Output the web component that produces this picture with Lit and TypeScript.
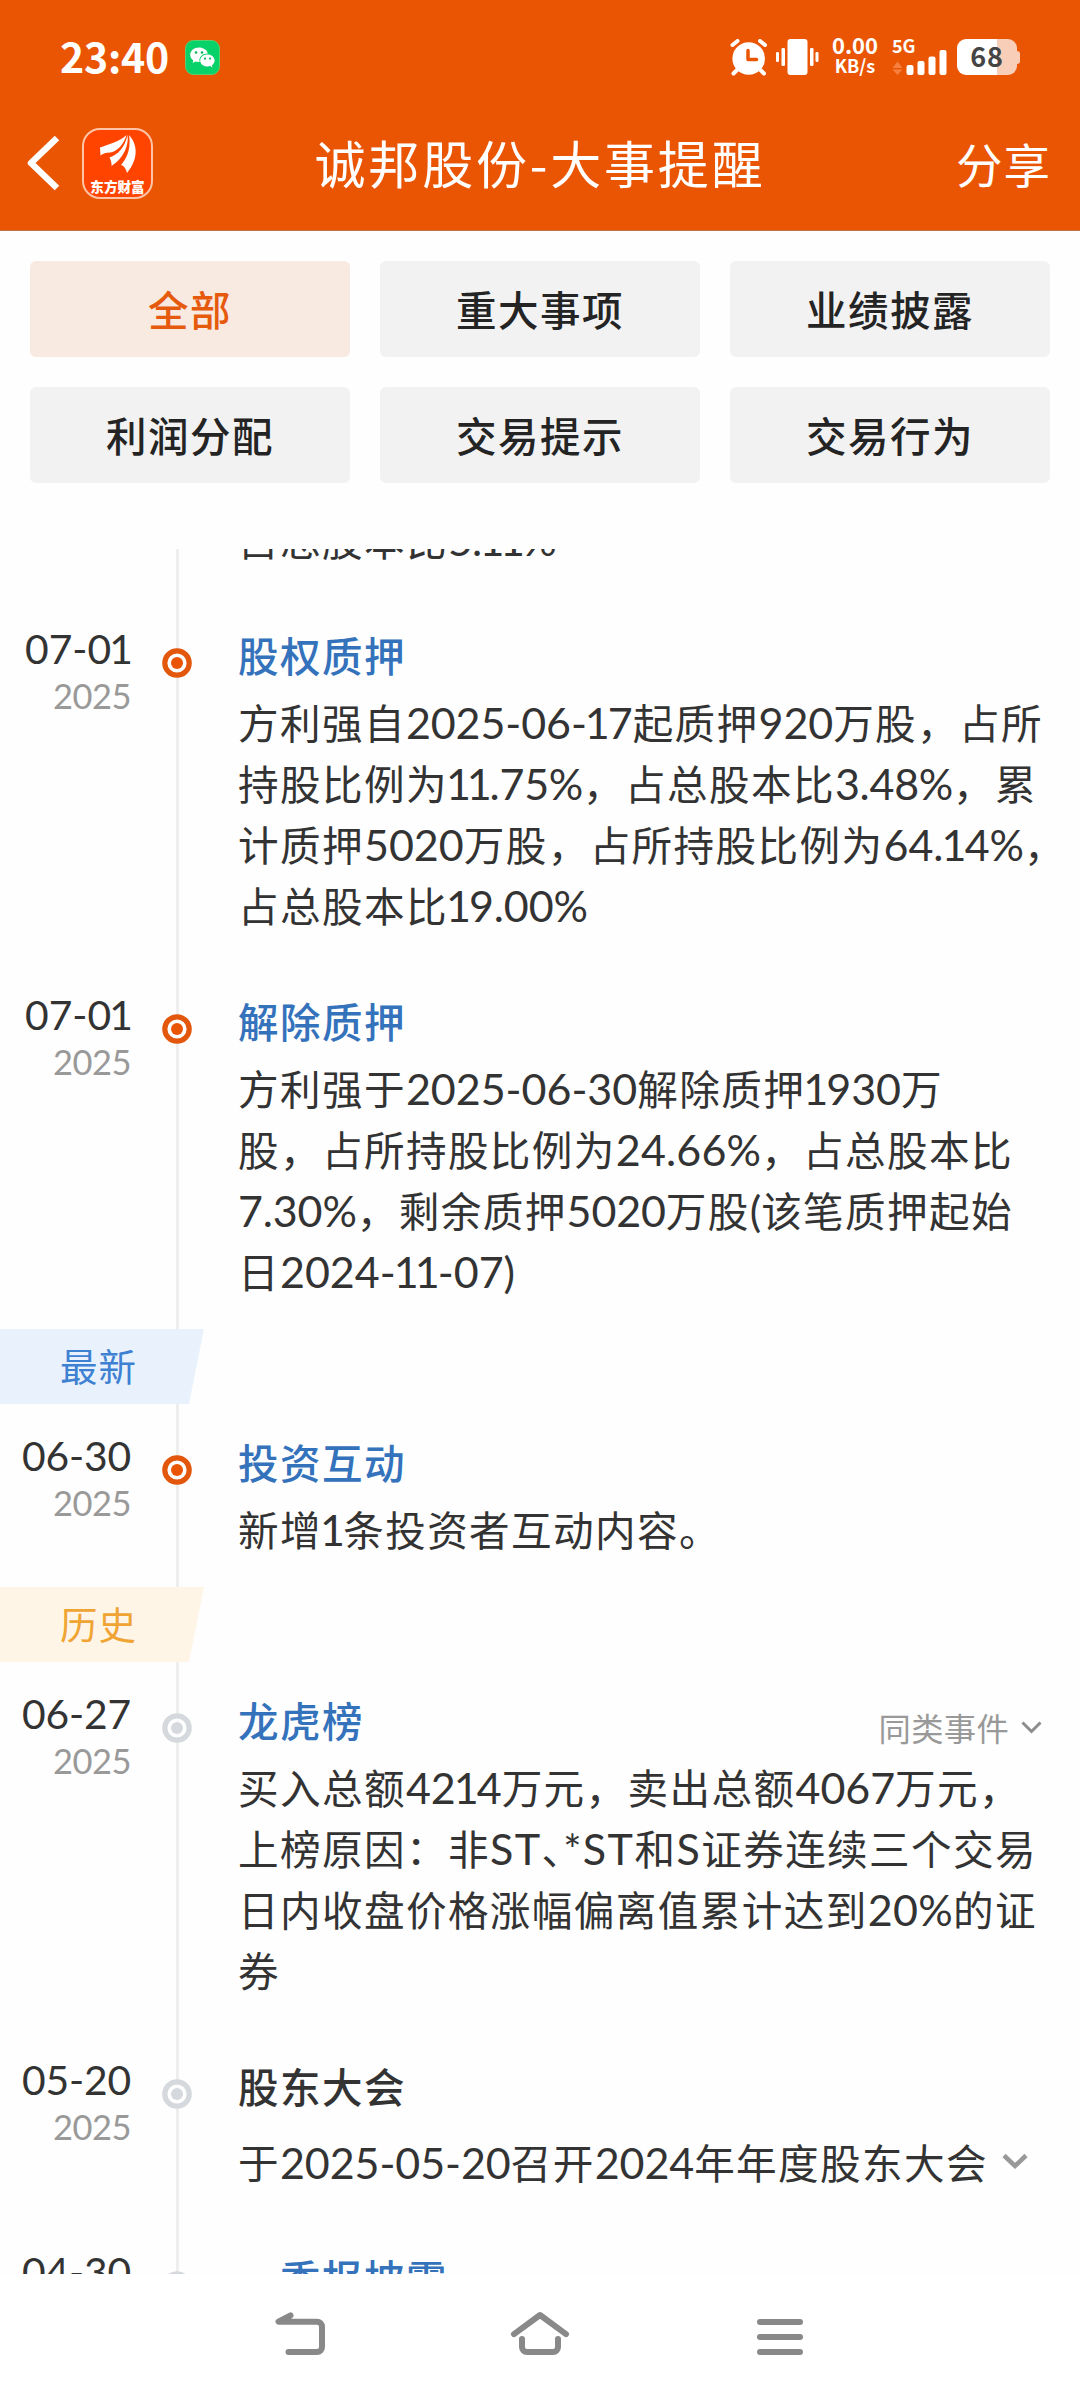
import { LitElement, html, css, svg, nothing } from "lit";
import { customElement, property } from "lit/decorators.js";

interface TextRow {
  text: string;
  width?: number;
}

interface EventItem {
  date: string;
  title: string;
  plain?: boolean;
  past?: boolean;
  similar?: boolean;
  expandable?: boolean;
  rows: TextRow[];
}

const FILTERS = ["全部", "重大事项", "业绩披露", "利润分配", "交易提示", "交易行为"];

const UPCOMING: EventItem[] = [
  {
    date: "07-01",
    title: "股权质押",
    rows: [
      { text: "方利强自2025-06-17起质押920万股，占所", width: 805 },
      { text: "持股比例为11.75%，占总股本比3.48%，累", width: 799 },
      { text: "计质押5020万股，占所持股比例为64.14%，", width: 828 },
      { text: "占总股本比19.00%", width: 350 },
    ],
  },
  {
    date: "07-01",
    title: "解除质押",
    rows: [
      { text: "方利强于2025-06-30解除质押1930万", width: 705 },
      { text: "股，占所持股比例为24.66%，占总股本比", width: 775 },
      { text: "7.30%，剩余质押5020万股(该笔质押起始", width: 775 },
      { text: "日2024-11-07)", width: 277 },
    ],
  },
];

const LATEST: EventItem[] = [
  { date: "06-30", title: "投资互动", rows: [{ text: "新增1条投资者互动内容。", width: 483 }] },
];

const HISTORY: EventItem[] = [
  {
    date: "06-27",
    title: "龙虎榜",
    past: true,
    similar: true,
    rows: [
      { text: "买入总额4214万元，卖出总额4067万元，", width: 783 },
      { text: "上榜原因：非ST、*ST和S证券连续三个交易", width: 799 },
      { text: "日内收盘价格涨幅偏离值累计达到20%的证", width: 799 },
      { text: "券" },
    ],
  },
  {
    date: "05-20",
    title: "股东大会",
    plain: true,
    past: true,
    expandable: true,
    rows: [{ text: "于2025-05-20召开2024年年度股东大会", width: 750 }],
  },
  { date: "04-30", title: "一季报披露", past: true, rows: [{ text: "" }] },
];

/** One line of mixed text; its Latin runs are spaced so the line has the given width. */
@customElement("text-row")
class TextRowElement extends LitElement {
  @property() text = "";
  @property({ type: Number }) width = 0;

  static styles = css`
    :host {
      display: inline-block;
      white-space: nowrap;
    }
    .run {
      font-family: Lato, "Noto Sans CJK SC", sans-serif;
      font-size: 1.060em;
      line-height: 1;
      letter-spacing: var(--run-spacing, 0px);
    }
    .thin {
      margin: 0 -0.045em;
    }
    .half {
      font-feature-settings: "halt";
    }
  `;

  updated() {
    this.style.setProperty("--run-spacing", "0px");
    const count = (this.text.match(/[\x20-\x7e]/g) ?? []).length;
    if (!this.width || !count) return;
    const gap = this.width - this.getBoundingClientRect().width;
    this.style.setProperty("--run-spacing", `${(gap / count).toFixed(3)}px`);
  }

  render() {
    return this.text.split(/([\x20-\x7e]+)/).map((part) => {
      if (!part) return nothing;
      if (part === "、") return html`<span class="half">${part}</span>`;
      if (!/^[\x20-\x7e]/.test(part)) return part;
      const pieces = part.split(/(1)/).map((p) => (p === "1" ? html`<span class="thin">1</span>` : p));
      return html`<span class="run">${pieces}</span>`;
    });
  }
}

@customElement("status-bar")
class StatusBar extends LitElement {
  static styles = css`
    :host {
      display: flex;
      align-items: center;
      height: 114px;
      padding: 0 60px 0 60px;
      color: #fff;
      font-family: "Noto Sans CJK SC", sans-serif;
      font-weight: 700;
    }
    svg {
      display: block;
      flex: none;
    }
    .clock {
      width: 125px;
      padding-bottom: 5px;
      font-size: 41px;
      line-height: 60px;
      letter-spacing: -0.2px;
      font-weight: 700;
    }
    .spacer {
      flex: 1;
    }
    .alarm {
      margin-right: 8px;
    }
    .speed {
      width: 50px;
      margin-left: 11px;
      padding-bottom: 4px;
      text-align: center;
      font-size: 22px;
      line-height: 21px;
    }
    .unit {
      font-size: 18px;
    }
    .network {
      display: flex;
      flex-direction: column;
      width: 56px;
      height: 36px;
      margin: 0 9px 0 12px;
    }
    .gen {
      font-size: 18px;
      line-height: 13px;
      height: 11px;
    }
    .battery {
      display: flex;
      align-items: center;
    }
    .level {
      width: 60px;
      height: 36px;
      border-radius: 9px;
      background: linear-gradient(90deg, #fff 0 40px, #f8ceb8 40px);
      color: #454545;
      font-size: 27px;
      line-height: 34px;
      text-align: center;
      letter-spacing: 0.8px;
    }
    .nub {
      width: 3px;
      height: 13px;
      border-radius: 0 3px 3px 0;
      background: #f8ceb8;
    }
  `;

  render() {
    return html`
      <div class="clock">23:40</div>
      <svg width="35" height="35" viewBox="0 0 35 35">
        <rect x=".5" y=".5" width="34" height="34" rx="8" fill="#07d169" stroke="#5bcf6b" />
        <path
          fill="#fff"
          d="M14 7.5c-5 0-8.8 3.2-8.8 7.3 0 2.3 1.2 4.2 3.1 5.6l-.7 2.6 3-1.6c1 .3 2.2.5 3.4.5h.7c-.2-.6-.3-1.1-.3-1.700 0-3.800 3.600-6.700 8-6.700h.5C22 10 18.300 7.500 14 7.500Z"
        />
        <path
          fill="#fff"
          d="M22.500 14.500c-4.200 0-7.300 2.700-7.300 6 0 3.400 3.100 6 7.300 6 .9 0 1.800-.1 2.600-.4l2.400 1.300-.6-2.200c1.700-1.200 2.700-2.900 2.700-4.700 0-3.300-3-6-7.100-6Z"
        />
        <g fill="#07b75b">
          <circle cx="11" cy="12.500" r="1.300" />
          <circle cx="17" cy="12.500" r="1.300" />
          <circle cx="20" cy="18.600" r="1.100" />
          <circle cx="25" cy="18.600" r="1.100" />
        </g>
      </svg>
      <div class="spacer"></div>
      <svg class="alarm" width="38" height="37" viewBox="0 0 38 37">
        <circle cx="18.700" cy="19.500" r="16.300" fill="#fff" />
        <g stroke="#fff" stroke-width="4" stroke-linecap="round">
          <path d="M2.500 6 7.500 2M35 6l-5-4M7 31l-3.500 3.500M30.500 31l3.500 3.500" />
        </g>
        <path d="M18 11.500v9h8.500" fill="none" stroke="#ea5504" stroke-width="3.500" stroke-linecap="round" stroke-linejoin="round" />
      </svg>
      <svg width="43" height="36" viewBox="0 0 43 36">
        <rect x="11.500" width="20" height="36" rx="3" fill="#fff" />
        <g fill="#fff">
          <rect x="5.500" y="9" width="3.500" height="18" rx="1.200" />
          <rect x="34" y="9" width="3.500" height="18" rx="1.200" />
          <rect y="13" width="3" height="10" rx="1.200" />
          <rect x="39.500" y="13" width="3" height="10" rx="1.200" />
        </g>
      </svg>
      <div class="speed">
        <div>0.00</div>
        <div class="unit">KB/s</div>
      </div>
      <div class="network">
        <div class="gen">5G</div>
        <svg width="56" height="25" viewBox="0 0 56 25">
          <path d="M.5 18 5.500 11.500 10.500 18ZM.5 19.500 5.500 25 10.500 19.500Z" fill="#f58040" />
          <g fill="#fff">
            <rect x="14.500" y="15" width="7" height="10" rx="2" />
            <rect x="25.500" y="11" width="7" height="14" rx="2" />
            <rect x="36.500" y="6.500" width="7" height="18.500" rx="2" />
            <rect x="47.500" y="0" width="7" height="25" rx="2" />
          </g>
        </svg>
      </div>
      <div class="battery">
        <div class="level">68</div>
        <div class="nub"></div>
      </div>
    `;
  }
}

@customElement("title-bar")
class TitleBar extends LitElement {
  static styles = css`
    :host {
      display: grid;
      grid-template-columns: 240px 1fr 240px;
      align-items: center;
      height: 98px;
      padding-bottom: 18px;
      color: #fff;
      font-family: "Noto Sans CJK SC", sans-serif;
    }
    .left {
      display: flex;
      align-items: center;
      gap: 22px;
      padding-left: 26px;
    }
    svg {
      display: block;
    }
    .logo {
      display: flex;
      flex-direction: column;
      align-items: center;
      box-sizing: border-box;
      width: 71px;
      height: 71px;
      border: 2px solid #ffc4a6;
      border-radius: 18px;
      background: #ff4400;
    }
    .brand {
      margin-top: 4px;
      font-size: 13.600px;
      line-height: 16px;
      font-weight: 900;
      white-space: nowrap;
    }
    .title {
      padding-bottom: 2px;
      text-align: center;
      font-size: 51px;
      line-height: 70px;
      letter-spacing: 2.800px;
      white-space: nowrap;
    }
    .share {
      padding-right: 29px;
      padding-bottom: 1px;
      text-align: right;
      font-size: 46.500px;
      line-height: 66px;
      letter-spacing: 1px;
    }
  `;

  render() {
    return html`
      <div class="left">
        <svg width="34" height="56" viewBox="0 0 34 56">
          <path d="M31 3 5 28l26 25" fill="none" stroke="#fff" stroke-width="6.500" stroke-linejoin="round" />
        </svg>
        <div class="logo">
          <svg width="38" height="44" viewBox="0 0 38 44">
            <g fill="#fff">
              <path d="M1 17.500C9 14.500 20 12 27.500 5 25 14 18 22 11 22.500 7 22.500 4 23.500 1.500 25.500Z" />
              <path d="M28.500 5C30 15 25 28 12.500 36 13 33 11.500 29.500 10.500 27.500 19 25 26 17 28.500 5Z" />
              <path d="M30 5C41 17 37 32 28 43 27 39 25.500 36 22 35 29 27 32 17 30 5Z" />
            </g>
          </svg>
          <div class="brand">东方财富</div>
        </div>
      </div>
      <div class="title">诚邦股份-大事提醒</div>
      <div class="share">分享</div>
    `;
  }
}

@customElement("filter-grid")
class FilterGrid extends LitElement {
  static styles = css`
    :host {
      display: grid;
      grid-template-columns: repeat(3, 1fr);
      grid-auto-rows: 96px;
      gap: 30px;
      padding: 30px 30px 66px;
      font-family: "Noto Sans CJK SC", sans-serif;
    }
    .chip {
      border-radius: 6px;
      background: #f2f2f2;
      color: #242424;
      font-size: 40.500px;
      font-weight: 500;
      line-height: 95px;
      letter-spacing: 1.500px;
      text-align: center;
    }
    .active {
      background: #f9eae1;
      color: #e55a0d;
    }
  `;

  render() {
    return FILTERS.map((name, i) => html`<div class="chip ${i === 0 ? "active" : ""}">${name}</div>`);
  }
}

@customElement("section-flag")
class SectionFlag extends LitElement {
  @property() label = "";
  @property({ reflect: true }) tone = "blue";

  static styles = css`
    :host {
      display: block;
      height: 75px;
    }
    .flag {
      box-sizing: border-box;
      width: 204px;
      height: 75px;
      padding-left: 60px;
      clip-path: polygon(0 0, 100% 0, 189px 100%, 0 100%);
      background: #e9f2fc;
      color: #3e81d2;
      font-family: "Noto Sans CJK SC", sans-serif;
      font-size: 37.500px;
      line-height: 72px;
      letter-spacing: 1px;
    }
    :host([tone="amber"]) .flag {
      background: #fef5e7;
      color: #efa434;
    }
  `;

  render() {
    return html`<div class="flag">${this.label}</div>`;
  }
}

@customElement("event-card")
class EventCard extends LitElement {
  @property({ attribute: false }) item!: EventItem;

  static styles = css`
    :host {
      display: grid;
      grid-template-columns: 132px 90px 1fr;
      padding: 0 30px 26px 0;
      color: #333;
      font-family: "Noto Sans CJK SC", sans-serif;
    }
    .when {
      display: flex;
      flex-direction: column;
      align-items: flex-end;
      padding: 26px 1px 0 0;
    }
    .day {
      font-size: 38.500px;
      line-height: 48px;
    }
    .year {
      font-size: 32.500px;
      line-height: 47px;
      color: #999;
    }
    .mark {
      padding: 51px 0 0 30px;
    }
    .mark svg {
      display: block;
    }
    .what {
      padding-left: 16px;
      min-width: 0;
    }
    .head {
      display: flex;
      justify-content: space-between;
      box-sizing: border-box;
      height: 94px;
      padding-top: 28px;
    }
    .title {
      font-size: 40.500px;
      font-weight: 500;
      line-height: 60px;
      letter-spacing: 1.500px;
      color: #3472bb;
    }
    .plain {
      color: #333;
    }
    .similar {
      display: flex;
      align-items: center;
      gap: 12px;
      height: 74px;
      padding-right: 8px;
      font-size: 32.300px;
      letter-spacing: 0.300px;
      color: #999;
    }
    .body {
      padding-bottom: 2px;
    }
    .row {
      display: flex;
      align-items: center;
      gap: 14px;
      height: 61px;
      font-size: 40.600px;
      line-height: 61px;
      letter-spacing: 1.400px;
    }
    .roomy {
      padding-top: 9px;
    }
  `;

  render() {
    const { item } = this;
    const outer = item.past ? "#d5d8dd" : "#e2570c";
    const inner = item.past ? "#d5d8dd" : "#ea5504";
    return html`
      <div class="when">
        <text-row class="day" .text=${item.date} .width=${item.date === "07-01" ? 106 : 109}></text-row>
        <text-row class="year" text="2025" .width=${78}></text-row>
      </div>
      <div class="mark">
        <svg width="30" height="30" viewBox="0 0 30 30">
          <circle cx="15" cy="15" r="12.200" fill="#fff" fill-opacity=".8" stroke=${outer} stroke-width="5.200" />
          <circle cx="15" cy="15" r="6" fill=${inner} />
        </svg>
      </div>
      <div class="what">
        <div class="head">
          <div class="title ${item.plain ? "plain" : ""}">${item.title}</div>
          ${item.similar
            ? html`<div class="similar">
                <span>同类事件</span>
                <svg width="21" height="13" viewBox="0 0 21 13">
                  <path d="M1.500 1.500 10.500 10.500 19.500 1.500" fill="none" stroke="#8c8c8c" stroke-width="3" />
                </svg>
              </div>`
            : nothing}
        </div>
        <div class="body ${item.expandable ? "roomy" : ""}">
          ${item.rows.map(
            (row) => html`<div class="row">
              <text-row .text=${row.text} .width=${row.width ?? 0}></text-row>
              ${item.expandable
                ? html`<svg width="26" height="17" viewBox="0 0 26 17">
                    <path d="M2 2.500 13 13 24 2.500" fill="none" stroke="#999" stroke-width="4.500" />
                  </svg>`
                : nothing}
            </div>`,
          )}
        </div>
      </div>
    `;
  }
}

const navIcons = {
  back: svg`<path d="M17.500 6.500 5.500 12.700H44a5 5 0 0 1 5 5V38a5 5 0 0 1-5 5H15.500" />`,
  home: svg`<path d="M1 25.200 27 6l26 19.200M9 30v8a5 5 0 0 0 5 5h26a5 5 0 0 0 5-5v-8" />`,
  menu: svg`<path d="M7 13h40M7 28h40M7 43h40" />`,
};

@customElement("nav-bar")
class NavBar extends LitElement {
  static styles = css`
    :host {
      display: flex;
      justify-content: center;
      gap: 182px;
      height: 91px;
      padding-top: 35px;
      background: #fff;
    }
    svg {
      display: block;
      overflow: visible;
      fill: none;
      stroke: #898989;
      stroke-width: 6;
      stroke-linecap: round;
      stroke-linejoin: round;
    }
  `;

  render() {
    return [navIcons.back, navIcons.home, navIcons.menu].map(
      (icon) => html`<svg width="58" height="56" viewBox="-2 0 58 56">${icon}</svg>`,
    );
  }
}

@customElement("app-root")
class AppRoot extends LitElement {
  static styles = css`
    :host {
      display: flex;
      flex-direction: column;
      width: 1080px;
      height: 2400px;
      overflow: hidden;
      background: #fefefe;
    }
    .top {
      box-sizing: border-box;
      height: 231px;
      background: #ea5504;
      border-bottom: 1px solid #b9764a;
    }
    .timeline {
      flex: 1;
      min-height: 0;
      overflow: hidden;
      background: linear-gradient(#eee, #eee) 175.500px 0 / 3px 100% no-repeat;
    }
    .carry {
      height: 61px;
      margin-top: -41px;
      padding: 0 0 28px 238px;
      color: #333;
      font-family: "Noto Sans CJK SC", sans-serif;
      font-size: 40.600px;
      line-height: 61px;
      letter-spacing: 1.400px;
    }
    nav-bar {
      flex: none;
    }
  `;

  private cards(items: EventItem[]) {
    return items.map((item) => html`<event-card .item=${item}></event-card>`);
  }

  render() {
    return html`
      <div class="top">
        <status-bar></status-bar>
        <title-bar></title-bar>
      </div>
      <filter-grid></filter-grid>
      <div class="timeline">
        <div class="carry"><text-row text="占总股本比5.11%" width="318"></text-row></div>
        ${this.cards(UPCOMING)}
        <section-flag label="最新"></section-flag>
        ${this.cards(LATEST)}
        <section-flag label="历史" tone="amber"></section-flag>
        ${this.cards(HISTORY)}
      </div>
      <nav-bar></nav-bar>
    `;
  }
}
